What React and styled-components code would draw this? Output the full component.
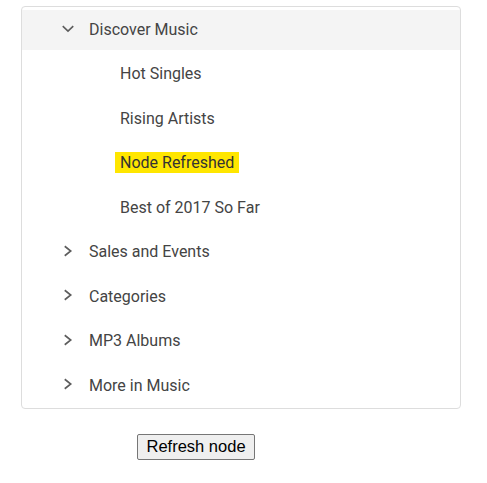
import React from 'react'
import styled, {createGlobalStyle} from 'styled-components'

const GlobalStyle = createGlobalStyle`
  body {
    margin: 0;
    background: #fff;
  }
`

const nodes = [
  {id: 1, level: 0, text: 'Discover Music', expand: 'open', selected: true},
  {id: 2, level: 1, text: 'Hot Singles'},
  {id: 3, level: 1, text: 'Rising Artists'},
  {id: 4, level: 1, text: 'Node Refreshed', highlight: true},
  {id: 5, level: 1, text: 'Best of 2017 So Far'},
  {id: 6, level: 0, text: 'Sales and Events', expand: 'closed'},
  {id: 7, level: 0, text: 'Categories', expand: 'closed'},
  {id: 8, level: 0, text: 'MP3 Albums', expand: 'closed'},
  {id: 9, level: 0, text: 'More in Music', expand: 'closed'},
]

const Chevron = ({open}) => (
  <svg width="24" height="24" viewBox="0 0 24 24" fill="none" stroke="#5c5c5c" strokeWidth="1.6">
    {open
      ? <polyline points="6.75,9.2 12,14.2 17.25,9.2"/>
      : <polyline points="8.75,6.25 14.75,11 8.75,15.75"/>}
  </svg>
)

const App = () => {
  return (
    <Page>
      <GlobalStyle/>
      <Tree>
        {nodes.map(node => (
          <Row key={node.id} $level={node.level} $selected={node.selected}>
            <Icon>{node.expand && <Chevron open={node.expand === 'open'}/>}</Icon>
            <Label $highlight={node.highlight}>{node.text}</Label>
          </Row>
        ))}
      </Tree>
      <Actions>
        <Button type="button">Refresh node</Button>
      </Actions>
    </Page>
  )
}

export default App

const Page = styled.div`
  padding: 6px 0 0 21px;
`

const Tree = styled.div`
  width: 440px;
  box-sizing: border-box;
  border: 1px solid #dddddd;
  border-radius: 4px;
  display: flex;
  flex-direction: column;
  font-family: Roboto, "Noto Sans", sans-serif;
`

const Row = styled.div`
  display: flex;
  align-items: center;
  box-sizing: border-box;
  height: 40px;
  margin: 3px 0 1.5px;
  padding-bottom: 2px;
  padding-left: ${p => 34 + p.$level * 31}px;
  background: ${p => (p.$selected ? '#f4f4f4' : 'transparent')};
`

const Icon = styled.span`
  display: flex;
  width: 24px;
  height: 24px;
  flex-shrink: 0;
`

const Label = styled.span`
  margin-left: 4px;
  padding: 0 5px;
  font-size: 16px;
  line-height: 21px;
  color: ${p => (p.$highlight ? '#333' : '#444')};
  background: ${p => (p.$highlight ? '#ffe600' : 'transparent')};
`

const Actions = styled.div`
  padding: 25px 0 0 116px;
`

const Button = styled.button`
  height: 26px;
  padding: 0 8.5px;
  font-family: "Liberation Sans", Arial, sans-serif;
  font-size: 16.5px;
  color: #000;
  background: #efefef;
  border: 1px solid #767676;
  border-radius: 2px;
`
